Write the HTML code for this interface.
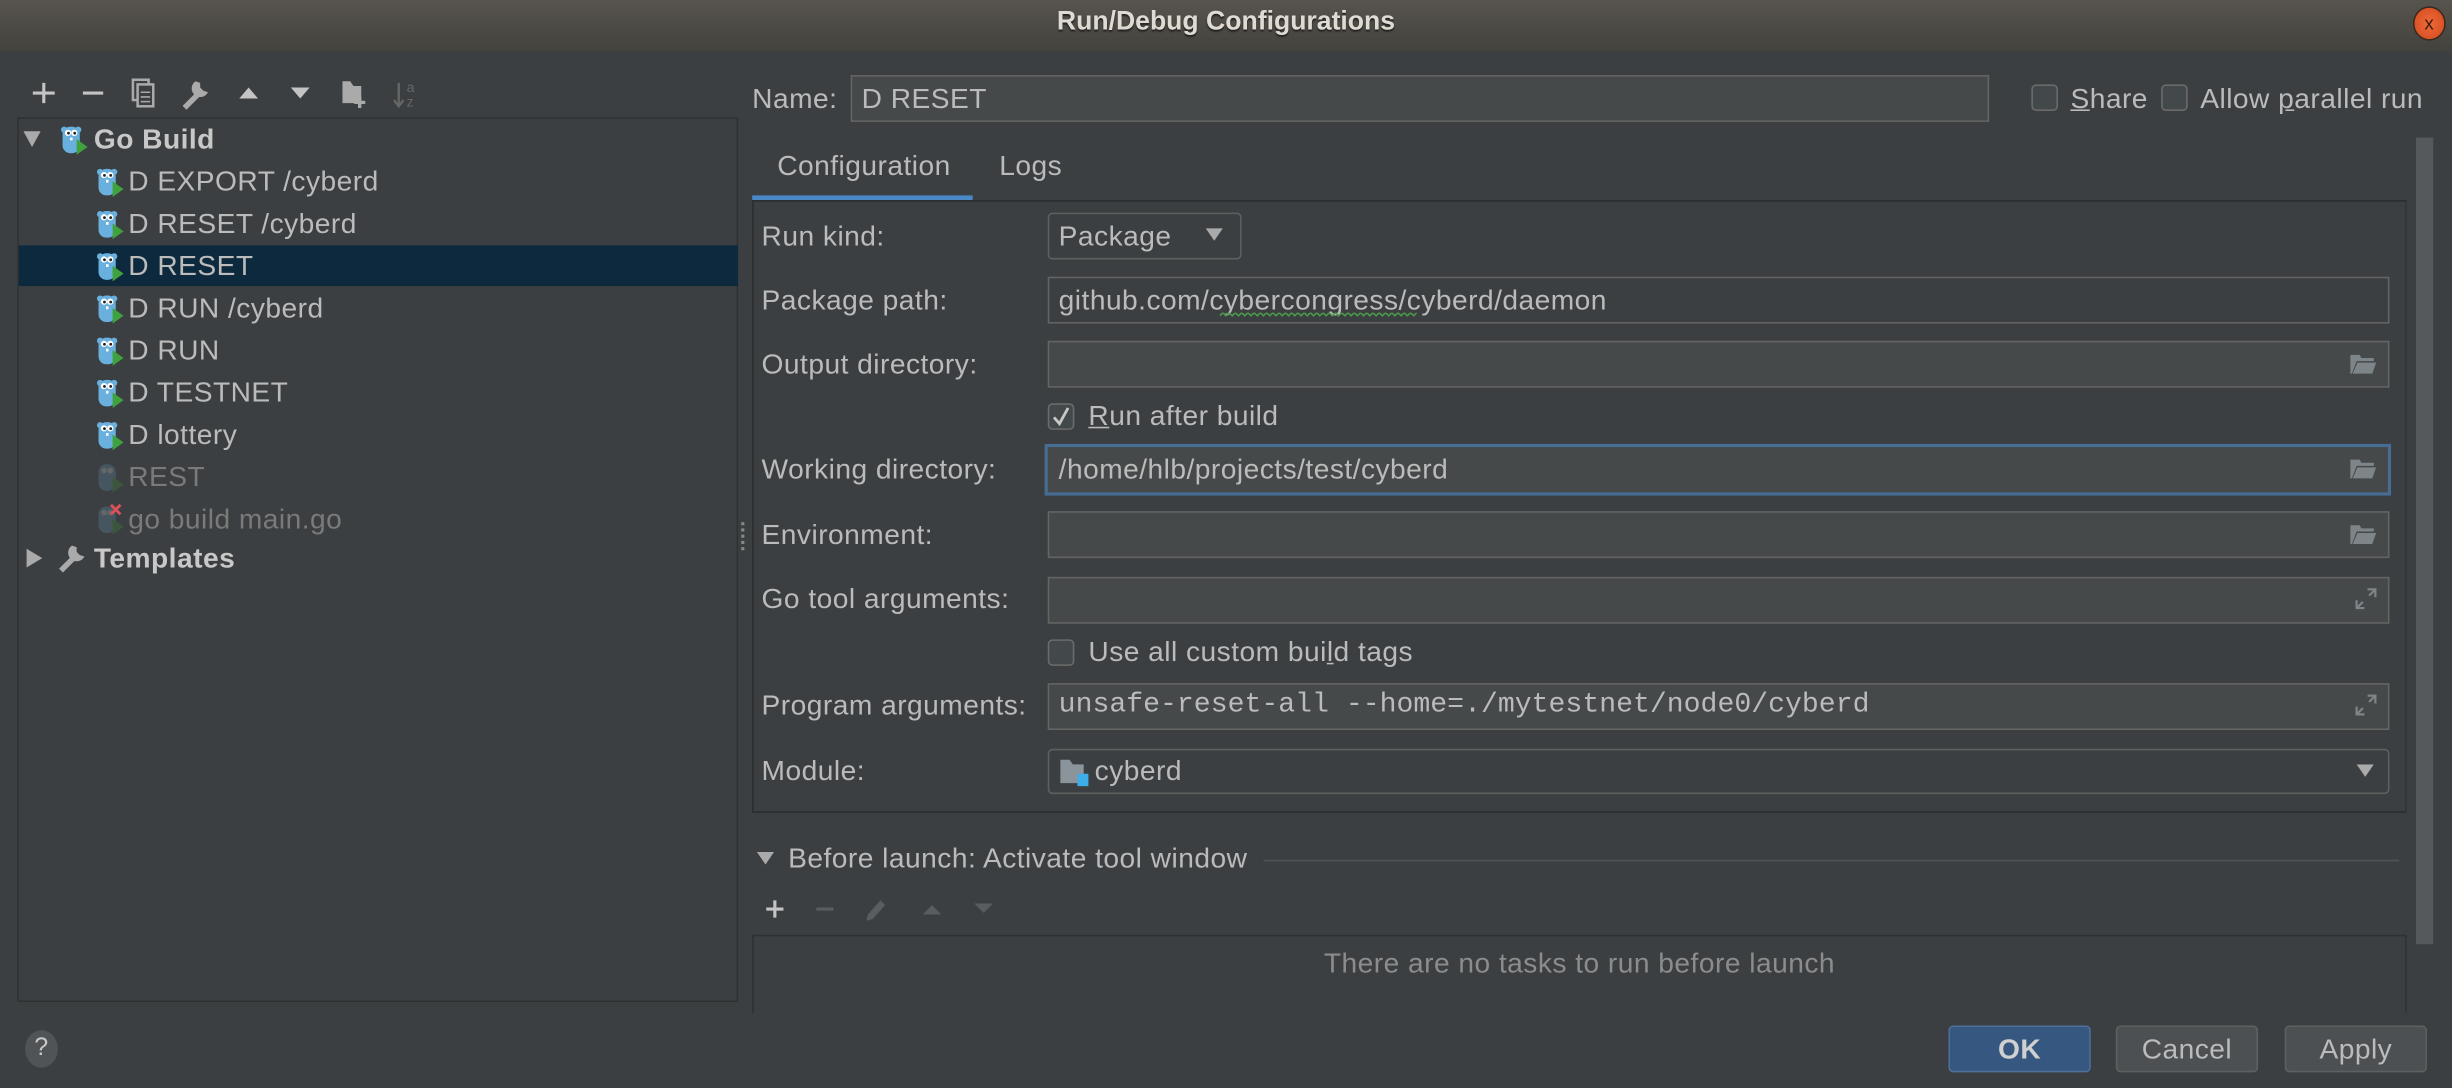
<!DOCTYPE html>
<html><head><meta charset="utf-8"><style>
html,body{margin:0;padding:0;width:2452px;height:1088px;overflow:hidden;background:#3c3f41}
#s{position:absolute;left:0;top:0;width:1568px;height:696px;transform:scale(1.56378,1.56322);transform-origin:0 0;background:#3c3f41;font-family:"Liberation Sans",sans-serif;font-size:18px;letter-spacing:0.3px;color:#bbbbbb}
.a{position:absolute;white-space:nowrap}
.t{position:absolute;white-space:nowrap;line-height:20px}
.in{position:absolute;background:#45494a;border:1px solid #646464;box-sizing:border-box}
.cb{position:absolute;width:17px;height:17px;border:1px solid #6b6b6b;border-radius:3px;box-sizing:border-box;background:#43494a}
.btn{position:absolute;width:91px;height:30px;box-sizing:border-box;border:1px solid #5e6060;border-radius:3px;background:#4c5052;text-align:center;line-height:28px;color:#bbbbbb}
.fold{position:absolute;width:18px;height:14px}
</style></head><body><div id="s">
<svg width="0" height="0" style="position:absolute"><defs>
<symbol id="g" viewBox="0 0 18 20">
<ellipse cx="3" cy="4" rx="2" ry="2" fill="#6ab0de"/><ellipse cx="12" cy="4" rx="2" ry="2" fill="#6ab0de"/>
<rect x="2" y="2" width="11" height="17" rx="5" fill="#6ab0de"/>
<circle cx="5.5" cy="6" r="2" fill="#fff"/><circle cx="9.5" cy="6" r="2" fill="#fff"/>
<circle cx="5.8" cy="6.2" r="0.9" fill="#222"/><circle cx="9.8" cy="6.2" r="0.9" fill="#222"/>
<rect x="6.8" y="9" width="1.6" height="1.8" fill="#fff"/>
<path d="M11 10 L18 15 L11 20 Z" fill="#3fa23f"/>
</symbol>
<symbol id="gd" viewBox="0 0 18 20" opacity="0.55">
<rect x="2" y="2" width="11" height="17" rx="5" fill="#4f6a7a"/>
<circle cx="5.5" cy="6" r="1.8" fill="#888"/><circle cx="9.5" cy="6" r="1.8" fill="#888"/>
<path d="M11 10 L18 15 L11 20 Z" fill="#3d6a3d"/>
</symbol>
<symbol id="fo" viewBox="0 0 18 14"><path d="M1 1 H7 L8 3 H16 V5 H5 L2 13 H1 Z M5.5 6 H17.5 L15 13 H2.5 Z" fill="#7d8588"/></symbol>
<symbol id="ex" viewBox="0 0 14 14"><path d="M8 1 H13 V6 M13 1 L9 5 M6 13 H1 V8 M1 13 L5 9" stroke="#7d8588" stroke-width="1.4" fill="none"/></symbol>
</defs></svg>

<!-- title bar -->
<div class="a" style="left:0;top:0;width:1568px;height:33px;background:linear-gradient(#57544e,#44423d)"></div>
<div class="t" style="left:0;width:1568px;text-align:center;top:4px;font-weight:bold;color:#dfdbd2;font-size:17px;letter-spacing:0;text-shadow:0 1px 1px #222">Run/Debug Configurations</div>
<div class="a" style="left:1543px;top:4px;width:19px;height:20px;border-radius:50%;background:radial-gradient(#f0693a,#d24a1c);border:1px solid #3a2a20;color:#3a1a0a;font-size:12px;text-align:center;line-height:20px">x</div>

<!-- toolbar -->
<svg class="a" style="left:18px;top:50px" width="260" height="22">
<path d="M3 9.5 H17 M10 3 V16" stroke="#c4c4c4" stroke-width="2"/>
<path d="M35 9.5 H48" stroke="#c4c4c4" stroke-width="2"/>
<rect x="67" y="1" width="10" height="13" fill="none" stroke="#aaa" stroke-width="1.6"/><rect x="70" y="4" width="10" height="14" fill="#3c3f41" stroke="#aaa" stroke-width="1.6"/><path d="M72 9H78M72 12H78M72 15H78" stroke="#aaa"/>
<path d="M100 19 L110 9" stroke="#aaa" stroke-width="3.5"/><path d="M107 2 a5.5 5.5 0 1 0 8 7 l-3 -1 l-2 -2 l0 -3 Z" fill="#aaa"/>
<path d="M135 13 L141 6 L147 13 Z" fill="#c4c4c4"/>
<path d="M168 6 L174 13 L180 6 Z" fill="#c4c4c4"/>
<path d="M201 2 H206 L208 5 H213 V16 H201 Z" fill="#aaa"/><path d="M212 12 V19 M208.5 15.5 H215.5" stroke="#aaa" stroke-width="2" /><path d="M212 12 V19 M208.5 15.5 H215.5" stroke="#aaa" stroke-width="2"/>
<path d="M237 3 V17 M234 14 L237 18 L240 14" stroke="#666" stroke-width="1.5" fill="none"/><text x="242" y="9" font-size="9" fill="#666" font-family="Liberation Sans">a</text><text x="242" y="18" font-size="9" fill="#666" font-family="Liberation Sans">z</text>
</svg>

<!-- left tree -->
<div class="a" style="left:11px;top:75px;width:461px;height:566px;border:1px solid #2f3133;box-sizing:border-box"></div>
<div class="a" style="left:12px;top:157px;width:460px;height:26px;background:#0d293e"></div>
<svg class="a" style="left:14px;top:83px" width="14" height="12"><path d="M1 1 H12 L6.5 11 Z" fill="#aaa"/></svg>
<svg class="a" style="left:38px;top:79px" width="18" height="20"><use href="#g"/></svg>
<div class="t" style="left:60px;top:79px;font-weight:bold;color:#c8c8c8">Go Build</div>
<svg class="a" style="left:61px;top:106px" width="18" height="20"><use href="#g"/></svg><div class="t" style="left:82px;top:106px">D EXPORT /cyberd</div>
<svg class="a" style="left:61px;top:133px" width="18" height="20"><use href="#g"/></svg><div class="t" style="left:82px;top:133px">D RESET /cyberd</div>
<svg class="a" style="left:61px;top:160px" width="18" height="20"><use href="#g"/></svg><div class="t" style="left:82px;top:160px">D RESET</div>
<svg class="a" style="left:61px;top:187px" width="18" height="20"><use href="#g"/></svg><div class="t" style="left:82px;top:187px">D RUN /cyberd</div>
<svg class="a" style="left:61px;top:214px" width="18" height="20"><use href="#g"/></svg><div class="t" style="left:82px;top:214px">D RUN</div>
<svg class="a" style="left:61px;top:241px" width="18" height="20"><use href="#g"/></svg><div class="t" style="left:82px;top:241px">D TESTNET</div>
<svg class="a" style="left:61px;top:268px" width="18" height="20"><use href="#g"/></svg><div class="t" style="left:82px;top:268px">D lottery</div>
<svg class="a" style="left:61px;top:295px" width="18" height="20"><use href="#gd"/></svg><div class="t" style="left:82px;top:295px;color:#7a7a7a">REST</div>
<svg class="a" style="left:61px;top:322px" width="18" height="20"><use href="#gd"/><path d="M10 1 L16 7 M16 1 L10 7" stroke="#e0505a" stroke-width="1.8"/></svg><div class="t" style="left:82px;top:322px;color:#7a7a7a">go build main.go</div>
<svg class="a" style="left:16px;top:350px" width="12" height="14"><path d="M1 1 V13 L11 7 Z" fill="#aaa"/></svg>
<svg class="a" style="left:37px;top:347px" width="20" height="20"><path d="M2 18 L11 9" stroke="#aaa" stroke-width="3.5"/><path d="M9 2 a5.5 5.5 0 1 0 8 7 l-3 -1 l-2 -2 l0 -3 Z" fill="#aaa"/></svg>
<div class="t" style="left:60px;top:347px;font-weight:bold;color:#c8c8c8">Templates</div>
<div class="a" style="left:474px;top:334px;width:2px;height:18px;border-left:2px dotted #888"></div>

<!-- name row -->
<div class="t" style="left:481px;top:53px">Name:</div>
<div class="in" style="left:544px;top:48px;width:728px;height:30px"></div>
<div class="t" style="left:551px;top:53px">D RESET</div>
<div class="cb" style="left:1299px;top:54px"></div><div class="t" style="left:1324px;top:53px"><u>S</u>hare</div>
<div class="cb" style="left:1382px;top:54px"></div><div class="t" style="left:1407px;top:53px">Allow <u>p</u>arallel run</div>

<!-- tabs -->
<div class="t" style="left:497px;top:96px">Configuration</div>
<div class="t" style="left:639px;top:96px">Logs</div>
<div class="a" style="left:481px;top:125px;width:141px;height:3px;background:#4a88c7"></div>
<div class="a" style="left:481px;top:128px;width:1058px;height:392px;border:1px solid #2b2d2e;border-right-color:#333;box-sizing:border-box"></div>
<div class="a" style="left:1545px;top:88px;width:11px;height:516px;background:#56595b"></div>

<!-- form -->
<div class="t" style="left:487px;top:141px">Run kind:</div>
<div class="in" style="left:670px;top:136px;width:124px;height:30px;border-radius:3px;background:#3c3f41;border-color:#5e6060"></div>
<div class="t" style="left:677px;top:141px">Package</div>
<svg class="a" style="left:771px;top:146px" width="12" height="9"><path d="M0 0 H11 L5.5 8 Z" fill="#aaa"/></svg>

<div class="t" style="left:487px;top:182px">Package path:</div>
<div class="in" style="left:670px;top:177px;width:858px;height:30px;background:#3c3f41"></div>
<div class="t" style="left:677px;top:182px">github.com/cybercongress/cyberd/daemon</div>
<svg class="a" style="left:780px;top:200px" width="126" height="4"><path d="M0 2 l2 -2 l2 2 l2 -2 l2 2 l2 -2 l2 2 l2 -2 l2 2 l2 -2 l2 2 l2 -2 l2 2 l2 -2 l2 2 l2 -2 l2 2 l2 -2 l2 2 l2 -2 l2 2 l2 -2 l2 2 l2 -2 l2 2 l2 -2 l2 2 l2 -2 l2 2 l2 -2 l2 2 l2 -2 l2 2 l2 -2 l2 2 l2 -2 l2 2 l2 -2 l2 2 l2 -2 l2 2 l2 -2 l2 2 l2 -2 l2 2 l2 -2 l2 2 l2 -2 l2 2 l2 -2 l2 2 l2 -2 l2 2 l2 -2 l2 2 l2 -2 l2 2 l2 -2 l2 2 l2 -2 l2 2 l2 -2 l2 2 l2 -2" stroke="#4c9a4c" fill="none"/></svg>

<div class="t" style="left:487px;top:223px">Output directory:</div>
<div class="in" style="left:670px;top:218px;width:858px;height:30px"></div>
<svg class="fold" style="left:1502px;top:226px"><use href="#fo"/></svg>

<div class="cb" style="left:670px;top:258px"></div>
<svg class="a" style="left:673px;top:260px" width="12" height="13"><path d="M1 7 L4.5 11 L10 1" stroke="#c8c8c8" stroke-width="1.8" fill="none"/></svg>
<div class="t" style="left:696px;top:256px"><u>R</u>un after build</div>

<div class="t" style="left:487px;top:290px">Working directory:</div>
<div class="in" style="left:668px;top:284px;width:861px;height:33px;border:2px solid #466d94"></div>
<div class="t" style="left:677px;top:290px">/home/hlb/projects/test/cyberd</div>
<svg class="fold" style="left:1502px;top:293px"><use href="#fo"/></svg>

<div class="t" style="left:487px;top:332px">Environment:</div>
<div class="in" style="left:670px;top:327px;width:858px;height:30px"></div>
<svg class="fold" style="left:1502px;top:335px"><use href="#fo"/></svg>

<div class="t" style="left:487px;top:373px">Go tool arguments:</div>
<div class="in" style="left:670px;top:369px;width:858px;height:30px"></div>
<svg class="a" style="left:1506px;top:376px" width="14" height="14"><use href="#ex"/></svg>

<div class="cb" style="left:670px;top:409px"></div>
<div class="t" style="left:696px;top:407px">Use all custom bui<u>l</u>d tags</div>

<div class="t" style="left:487px;top:441px">Program arguments:</div>
<div class="in" style="left:670px;top:437px;width:858px;height:30px"></div>
<div class="t" style="left:677px;top:441px;font-family:'Liberation Mono',monospace;font-size:18px;letter-spacing:0">unsafe-reset-all --home=./mytestnet/node0/cyberd</div>
<svg class="a" style="left:1506px;top:444px" width="14" height="14"><use href="#ex"/></svg>

<div class="t" style="left:487px;top:483px">Module:</div>
<div class="in" style="left:670px;top:479px;width:858px;height:29px;border-radius:3px;background:#3c3f41;border-color:#5e6060"></div>
<svg class="a" style="left:678px;top:485px" width="20" height="18"><path d="M0 1 H6 L8 4 H15 V16 H0 Z" fill="#8a949a"/><rect x="11" y="10" width="7" height="8" fill="#3daee9"/></svg>
<div class="t" style="left:700px;top:483px">cyberd</div>
<svg class="a" style="left:1507px;top:489px" width="12" height="9"><path d="M0 0 H11 L5.5 8 Z" fill="#aaa"/></svg>

<!-- before launch -->
<svg class="a" style="left:484px;top:545px" width="12" height="9"><path d="M0 0 H11 L5.5 8 Z" fill="#aaa"/></svg>
<div class="t" style="left:504px;top:539px">Before launch: Activate tool window</div>
<div class="a" style="left:808px;top:550px;width:726px;height:1px;background:#515456"></div>
<svg class="a" style="left:486px;top:572px" width="160" height="20">
<path d="M4 9.5 H15 M9.5 4 V15" stroke="#c4c4c4" stroke-width="2"/>
<path d="M36 9.5 H47" stroke="#5a5d5f" stroke-width="2"/>
<path d="M68 17 L69 13 L77 4 L80 7 L72 16 Z" fill="#5a5d5f"/>
<path d="M104 13 L110 7 L116 13 Z" fill="#5a5d5f"/>
<path d="M137 6 L143 12 L149 6 Z" fill="#5a5d5f"/>
</svg>
<div class="a" style="left:481px;top:598px;width:1058px;height:50px;border:1px solid #2f3133;border-bottom:none;box-sizing:border-box;background:#3c3f41"></div>
<div class="t" style="left:481px;width:1058px;text-align:center;top:606px;color:#8c8c8c">There are no tasks to run before launch</div>

<!-- bottom -->
<div class="a" style="left:16px;top:659px;width:21px;height:24px;border-radius:50%;background:#505456;color:#c8c8c8;text-align:center;line-height:24px;font-size:16px">?</div>
<div class="btn" style="left:1246px;top:656px;background:#365880;border-color:#4c709a;font-weight:bold;color:#d0d0d0">OK</div>
<div class="btn" style="left:1353px;top:656px">Cancel</div>
<div class="btn" style="left:1461px;top:656px">Apply</div>
</div></body></html>
